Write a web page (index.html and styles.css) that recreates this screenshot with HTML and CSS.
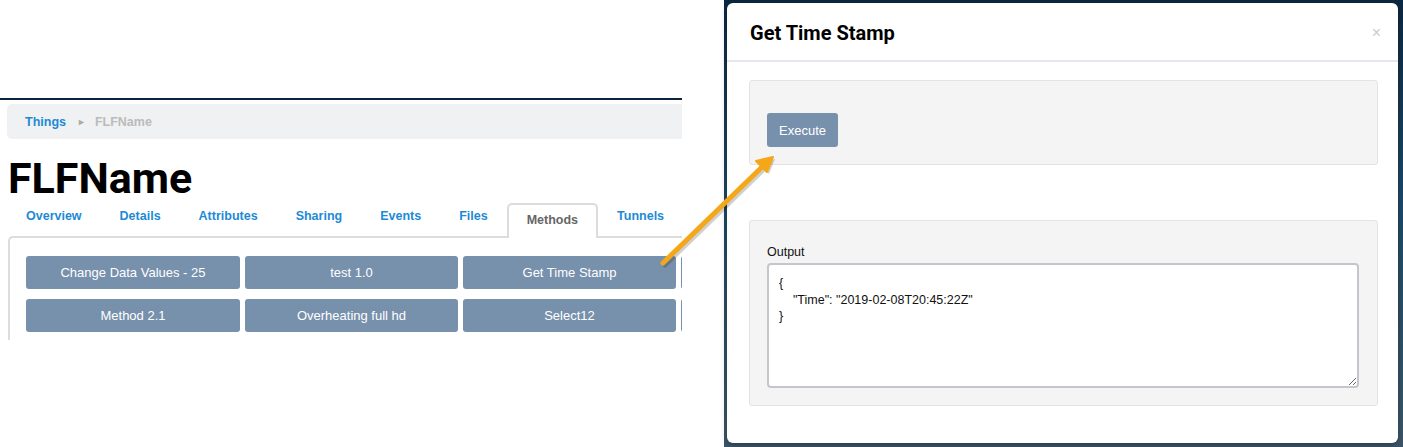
FILE: index.html
```html
<!DOCTYPE html>
<html lang="en">

<head>
    <meta charset="UTF-8">
    <meta name="viewport" content="width=device-width, initial-scale=1.0">
    <title>FLFName - Methods</title>
    <link rel="stylesheet" href="styles.css">
</head>

<body>
    <div class="shot">
        <div class="page">
            <div class="breadcrumb">
                <a href="#">Things</a>
                <span class="sep">&#9658;</span>
                <span class="current">FLFName</span>
            </div>

            <h1>FLFName</h1>

            <ul class="tabs">
                <li><a href="#">Overview</a></li>
                <li><a href="#">Details</a></li>
                <li><a href="#">Attributes</a></li>
                <li><a href="#">Sharing</a></li>
                <li><a href="#">Events</a></li>
                <li><a href="#">Files</a></li>
                <li class="active"><a href="#">Methods</a></li>
                <li><a href="#">Tunnels</a></li>
            </ul>

            <div class="tab-panel">
                <div class="methods">
                    <button class="btn">Change Data Values - 25</button>
                    <button class="btn">test 1.0</button>
                    <button class="btn">Get Time Stamp</button>
                    <button class="btn"></button>
                    <button class="btn">Method 2.1</button>
                    <button class="btn">Overheating full hd</button>
                    <button class="btn">Select12</button>
                    <button class="btn"></button>
                </div>
            </div>
        </div>

        <div class="backdrop">
            <div class="modal">
                <div class="modal-header">
                    <h2>Get Time Stamp</h2>
                    <span class="close">&times;</span>
                </div>
                <div class="modal-body">
                    <div class="well">
                        <button class="btn">Execute</button>
                    </div>
                    <div class="well output">
                        <label for="outputBox">Output</label>
                        <textarea id="outputBox" readonly>{
    "Time": "2019-02-08T20:45:22Z"
}</textarea>
                    </div>
                </div>
            </div>
        </div>

        <svg class="arrow" width="1403" height="447" viewBox="0 0 1403 447">
            <g transform="translate(2,2)" opacity="0.18">
                <line x1="663" y1="263" x2="762" y2="167" stroke="#000" stroke-width="5" stroke-linecap="round" />
                <polygon points="773,157 756,161 767,172" fill="#000" />
            </g>
            <line x1="663" y1="263" x2="762" y2="167" stroke="#f5a71a" stroke-width="5" stroke-linecap="round" />
            <polygon points="773,157 756,161 767,172" fill="#f5a71a" stroke="#f5a71a" stroke-width="2" stroke-linejoin="round" />
        </svg>
    </div>
</body>

</html>
```

FILE: styles.css
```css
* {
    box-sizing: border-box;
}

body {
    margin: 0;
    background: #fff;
    font-family: "Liberation Sans", Arial, sans-serif;
    font-size: 13px;
    color: #222;
}

.shot {
    position: relative;
    display: flex;
    width: 1403px;
    height: 447px;
    overflow: hidden;
}

/* left: thing page */

.page {
    width: 682px;
    height: 242px;
    margin-top: 98px;
    border-top: 2px solid #0b2540;
    overflow: hidden;
    flex-shrink: 0;
}

.breadcrumb {
    display: flex;
    align-items: center;
    height: 35px;
    margin: 4px 0 0 7px;
    padding-left: 18px;
    background: #f0f1f3;
    border-radius: 5px 0 0 5px;
    font-size: 12.5px;
    font-weight: bold;
}

.breadcrumb a {
    color: #1d8ad6;
    text-decoration: none;
}

.breadcrumb .sep {
    margin: 0 9px 0 11px;
    color: #aaa;
    font-size: 9px;
}

.breadcrumb .current {
    color: #bbb;
}

h1 {
    margin: 17px 0 0 8px;
    font-family: Roboto, "DejaVu Sans", sans-serif;
    font-weight: 700;
    font-size: 43px;
    line-height: 44px;
    color: #000;
}

.tabs {
    display: flex;
    list-style: none;
    margin: 3px 0 0 7px;
    padding: 0;
    height: 33px;
}

.tabs li {
    display: flex;
    align-items: center;
    padding: 0 17px;
    border: 2px solid transparent;
    border-bottom: 0;
    border-radius: 5px 5px 0 0;
}

.tabs a {
    color: #1d8ad6;
    font-size: 12.5px;
    font-weight: bold;
    text-decoration: none;
    margin-top: -10px;
}

.tabs li.active {
    position: relative;
    z-index: 1;
    height: 35px;
    padding: 0 18px 0 18px;
    border-color: #dcdcdc;
    background: #fff;
}

.tabs li.active a {
    color: #666;
    margin-top: -4px;
}

.tab-panel {
    margin-left: 8px;
    padding: 18px 0 0 16px;
    height: 104px;
    border: 2px solid #dcdcdc;
    border-right: 0;
    border-bottom: 0;
    border-top-left-radius: 5px;
}

.methods {
    display: grid;
    grid-template-columns: 214px 213px 213px 213px;
    grid-auto-rows: 33px;
    column-gap: 5px;
    row-gap: 10px;
}

.btn {
    font-family: "Liberation Sans", Arial, sans-serif;
    font-size: 13px;
    color: #fff;
    background: #7790ac;
    border: 0;
    border-radius: 3px;
    padding: 0;
    cursor: pointer;
}

/* right: method modal */

.backdrop {
    width: 679px;
    margin-left: 42px;
    padding: 3px 5px 4px 3px;
    background: linear-gradient(to bottom, #0c2741 0%, #1e4865 45%, #3c5668 100%);
    flex-shrink: 0;
}

.modal {
    height: 100%;
    background: #fff;
    border-radius: 6px;
    box-shadow: 0 2px 6px rgba(0, 0, 0, 0.3);
}

.modal-header {
    display: flex;
    justify-content: space-between;
    align-items: center;
    height: 59px;
    padding: 2px 17px 0 23px;
    border-bottom: 2px solid #e4e8ec;
}

.modal-header h2 {
    margin: 0;
    font-family: Roboto, "DejaVu Sans", sans-serif;
    font-weight: 700;
    font-size: 20px;
    color: #000;
}

.close {
    color: #c8cbce;
    font-size: 16px;
}

.modal-body {
    padding: 18px 20px 0 22px;
}

.well {
    background: #f4f4f4;
    border: 1px solid #e3e3e3;
    border-radius: 3px;
    padding: 32px 17px 17px;
}

.well .btn {
    width: 71px;
    height: 34px;
}

.output {
    margin-top: 55px;
    padding: 24px 18px 17px 17px;
}

.output label {
    display: block;
    height: 15px;
    margin-bottom: 3px;
    font-size: 12.5px;
    color: #111;
}

.output textarea {
    display: block;
    width: 100%;
    height: 125px;
    padding: 10px 10px;
    border: 2px solid #c3c7cb;
    border-radius: 4px;
    font-family: "Liberation Sans", Arial, sans-serif;
    font-size: 12.5px;
    line-height: 16.5px;
    color: #111;
    background: #fff;
    white-space: pre;
}

.arrow {
    position: absolute;
    left: 0;
    top: 0;
    pointer-events: none;
}
```
